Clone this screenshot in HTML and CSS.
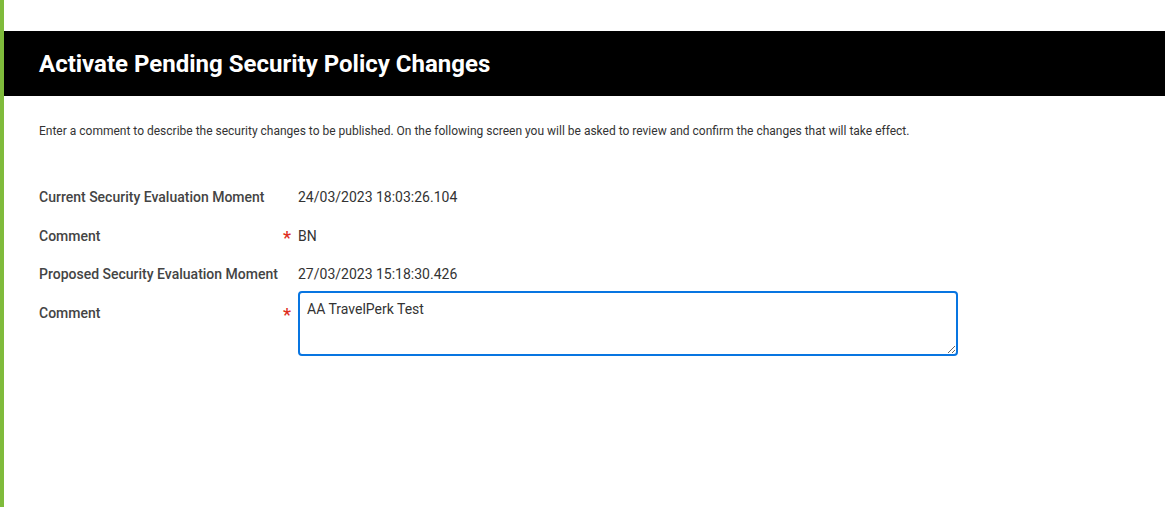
FILE: index.html
```html
<!DOCTYPE html>
<html>
<head>
<meta charset="utf-8">
<link rel="stylesheet" href="styles.css">
</head>
<body>
<div class="page">
  <div class="header"><h1 class="title">Activate Pending Security Policy Changes</h1></div>
  <p class="intro">Enter a comment to describe the security changes to be published. On the following screen you will be asked to review and confirm the changes that will take effect.</p>
  <div class="form">
    <div class="row">
      <div class="label">Current Security Evaluation Moment</div>
      <div class="req"></div>
      <div class="value">24/03/2023 18:03:26.104</div>
    </div>
    <div class="row">
      <div class="label">Comment</div>
      <div class="req">*</div>
      <div class="value">BN</div>
    </div>
    <div class="row">
      <div class="label">Proposed Security Evaluation Moment</div>
      <div class="req"></div>
      <div class="value">27/03/2023 15:18:30.426</div>
    </div>
    <div class="row row-input">
      <div class="label">Comment</div>
      <div class="req">*</div>
      <textarea class="textarea" autofocus>AA TravelPerk Test </textarea>
    </div>
  </div>
</div>
</body>
</html>
```
FILE: styles.css
```css
html, body {
  margin: 0;
  padding: 0;
  height: 100%;
  background: #fff;
}
body {
  font-family: Roboto, "Liberation Sans", Arial, sans-serif;
  color: #333333;
}
.page {
  min-height: 100%;
  box-sizing: border-box;
  border-left: 4px solid #7fbb3b;
  padding-top: 31px;
}
.header {
  background: #000;
  height: 65px;
  display: flex;
  align-items: center;
  padding-left: 35px;
}
.title {
  margin: 0;
  color: #fff;
  font-size: 24px;
  font-weight: 700;
  letter-spacing: 0;
}
.intro {
  margin: 27px 0 0 35px;
  font-size: 12px;
  line-height: 16px;
  color: #333;
}
.form {
  margin: 48px 0 0 35px;
  display: flex;
  flex-direction: column;
}
.row {
  display: flex;
  align-items: flex-start;
  height: 38.7px;
  font-size: 14px;
  line-height: 20px;
}
.label {
  width: 244px;
  font-weight: 500;
  color: #444;
}
.req {
  width: 15px;
  color: #de2e21;
  font-size: 18px;
  line-height: 24px;
  font-weight: 500;
}
.value {
  color: #333;
}
.row-input .req {
  margin-top: 0;
}
.textarea {
  margin-top: -12px;
  box-sizing: border-box;
  width: 660px;
  height: 65px;
  border: 2px solid #0875e1;
  border-radius: 4px;
  padding: 6px 7px;
  font-family: Roboto, "Liberation Sans", Arial, sans-serif;
  font-size: 14px;
  line-height: 20px;
  color: #333;
  caret-color: #333;
  outline: none;
  resize: both;
}
```
